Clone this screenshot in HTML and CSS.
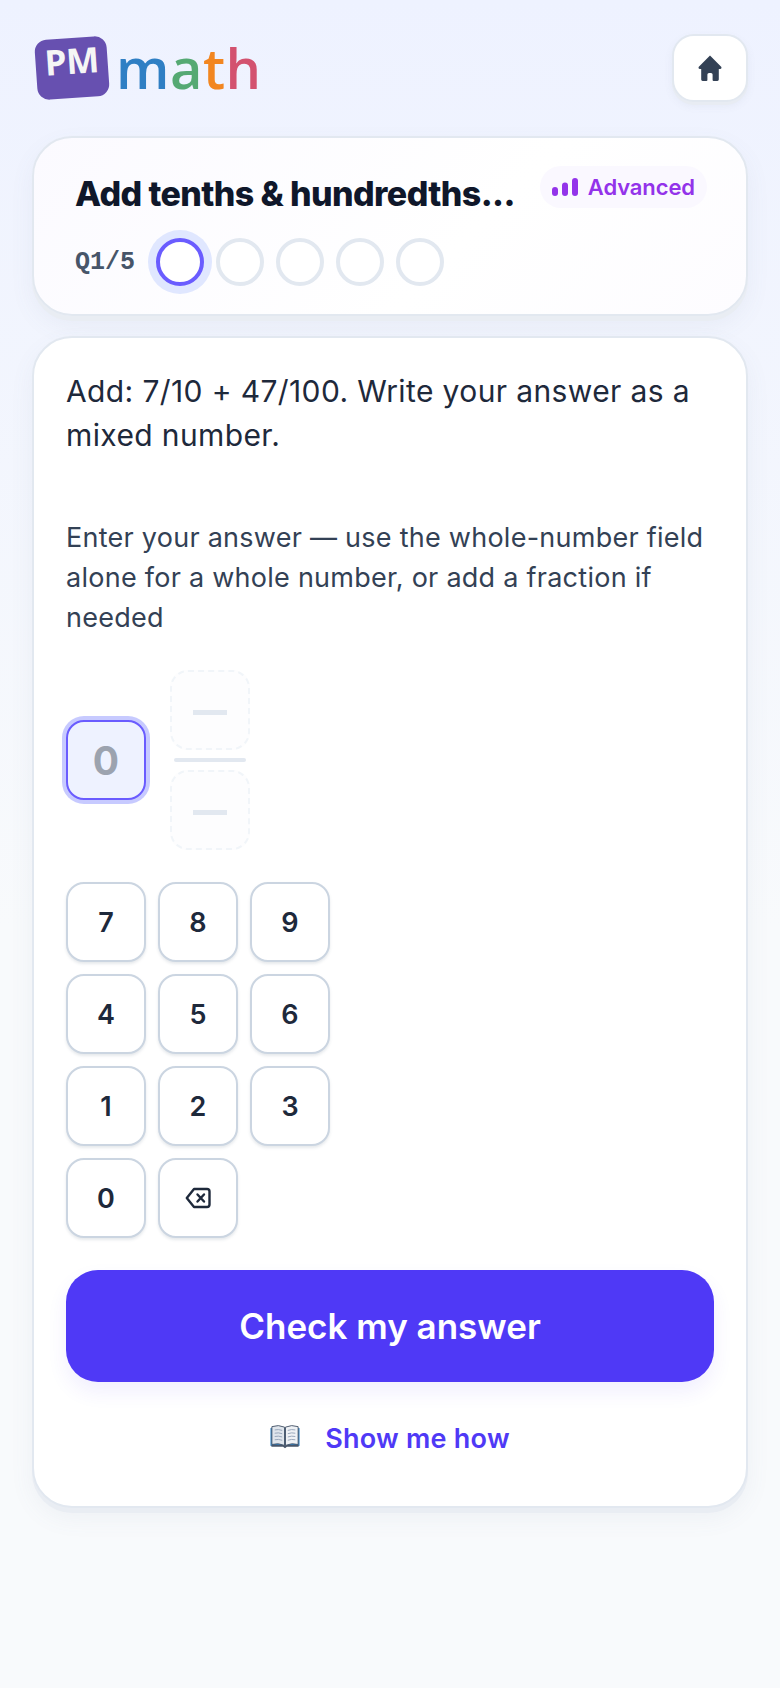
FILE: index.html
```html
<!DOCTYPE html>
<html lang="en">
<head>
<meta charset="utf-8">
<title>PM math</title>
<link rel="stylesheet" href="styles.css">
</head>
<body>
<main class="page">
  <header class="topbar">
    <div class="logo">
      <span class="logo-tile">PM</span>
      <span class="logo-word"><span class="c-m">m</span><span class="c-a">a</span><span class="c-t">t</span><span class="c-h">h</span></span>
    </div>
    <button class="home-btn" aria-label="Home">
      <svg width="24" height="27" viewBox="0 0 24 27"><path fill="#334155" d="M12 0.5 L23.4 12 Q24 13.6 22.4 13.9 L20.8 13.9 L20.8 24.6 Q20.8 26 19.4 26 L15.6 26 Q14.6 26 14.6 25 L14.6 19.6 Q14.6 18 13 18 L11 18 Q9.4 18 9.4 19.6 L9.4 25 Q9.4 26 8.4 26 L4.6 26 Q3.2 26 3.2 24.6 L3.2 13.9 L1.6 13.9 Q0 13.6 0.6 12 Z"/></svg>
    </button>
  </header>

  <section class="card quiz-head">
    <div class="title-row">
      <h1 class="title">Add tenths &amp; hundredths...</h1>
      <span class="badge">
        <svg width="26" height="18" viewBox="0 0 26 18"><rect x="0" y="9" width="6" height="9" rx="3" fill="#9333ea"/><rect x="10" y="4.500" width="6" height="13.500" rx="3" fill="#9333ea"/><rect x="20" y="0" width="6" height="18" rx="3" fill="#9333ea"/></svg>
        Advanced
      </span>
    </div>
    <div class="progress">
      <span class="q-label">Q1/5</span>
      <span class="dot active"></span>
      <span class="dot"></span>
      <span class="dot"></span>
      <span class="dot"></span>
      <span class="dot"></span>
    </div>
  </section>

  <section class="card question">
    <p class="prompt">Add: 7/10 + 47/100. Write your answer as a mixed number.</p>
    <p class="hint">Enter your answer — use the whole-number field alone for a whole number, or add a fraction if needed</p>

    <div class="answer">
      <div class="cell whole">0</div>
      <div class="fraction">
        <div class="cell empty"><span class="dash"></span></div>
        <div class="bar"></div>
        <div class="cell empty"><span class="dash"></span></div>
      </div>
    </div>

    <div class="keypad">
      <button class="key">7</button><button class="key">8</button><button class="key">9</button>
      <button class="key">4</button><button class="key">5</button><button class="key">6</button>
      <button class="key">1</button><button class="key">2</button><button class="key">3</button>
      <button class="key">0</button>
      <button class="key" aria-label="Backspace">
        <svg width="26" height="22" viewBox="0 0 26 22" fill="none" stroke="#1e293b" stroke-width="2.400" stroke-linejoin="round" stroke-linecap="round"><path d="M9 2 H22 Q24.500 2 24.500 4.500 V17.500 Q24.500 20 22 20 H9 L1.800 11 Z"/><path d="M12.500 7.500 L19 14.500 M19 7.500 L12.500 14.500"/></svg>
      </button>
    </div>

    <button class="check">Check my answer</button>

    <div class="how">
      <svg class="book" width="30" height="25" viewBox="0 0 32 26">
        <path fill="#2f7fc1" d="M0.500 4 H31.500 V23 H0.500 Z"/>
        <path fill="#475569" d="M1.500 22 H30.500 V24 H18 L16 25.500 L14 24 H1.500 Z"/>
        <path fill="#dfe5ec" stroke="#475569" stroke-width="1" d="M2 2.500 Q9 0 15.500 3 V22.500 Q9 19.500 2 21.500 Z"/>
        <path fill="#eef1f5" stroke="#475569" stroke-width="1" d="M30 2.500 Q23 0 16.500 3 V22.500 Q23 19.500 30 21.500 Z"/>
        <path stroke="#94a3b8" stroke-width="1" fill="none" d="M5 6 Q9 5 13 6.500 M5 9.500 Q9 8.500 13 10 M5 13 Q9 12 13 13.500 M5 16.500 Q9 15.500 13 17 M19 6.500 Q23 5 27 6 M19 10 Q23 8.500 27 9.500 M19 13.500 Q23 12 27 13 M19 17 Q23 15.500 27 16.500"/>
      </svg>
      <span class="how-text">Show me how</span>
    </div>
  </section>
</main>
</body>
</html>
```
FILE: styles.css
```css
* { box-sizing: border-box; }
html, body { margin: 0; padding: 0; }
body {
  min-height: 1688px;
  background: linear-gradient(180deg, #eef2ff 0%, #f8fafc 55%, #f8fafc 100%);
  font-family: Inter, "Liberation Sans", sans-serif;
  color: #1e293b;
}
button { font-family: inherit; }
.page { padding: 34px 32px 0 32px; width: 780px; }

.topbar { display: flex; justify-content: space-between; align-items: center; height: 68px; margin-bottom: 34px; }
.logo { display: flex; align-items: center; gap: 8px; margin-left: 4px; }
.logo-tile {
  width: 72px; height: 60px; border-radius: 12px; background: #6750b0;
  color: #f5f5f5; font-family: "Open Sans", sans-serif; font-weight: 700; font-size: 35px; line-height: 1;
  letter-spacing: -.5px;
  display: flex; justify-content: center; padding-top: 5px;
  transform: rotate(-4deg);
}
.logo-word { font-family: "Open Sans", sans-serif; font-weight: 600; font-size: 56px; line-height: 60px; letter-spacing: .5px; margin-top: -3px; }
.c-m { color: #2f7fc4; } .c-a { color: #55a973; } .c-t { color: #f28620; } .c-h { color: #d3526f; }

.home-btn {
  width: 76px; height: 68px; border-radius: 22px; background: #fff; padding: 0;
  border: 2px solid #e2e8f0; box-shadow: 0 3px 0 #e8ecf3, 0 4px 8px rgba(100,116,139,.08);
  display: flex; align-items: center; justify-content: center;
}

.card {
  background: #fff; border: 2px solid #e2e8f0; border-radius: 40px;
  box-shadow: 0 5px 0 #e9edf3, 0 10px 24px rgba(100,116,139,.07);
}

.quiz-head {
  height: 180px; padding: 28px 39px 0 41px; margin-bottom: 20px;
  background: linear-gradient(135deg, #fbfaff 0%, #ffffff 60%, #fdfcff 100%);
}
.title-row { display: flex; justify-content: space-between; align-items: flex-start; height: 48px; }
.title { margin: 6px 0 0; font-size: 34px; line-height: 44px; font-weight: 800; color: #0f172a; letter-spacing: -.6px; white-space: nowrap; }
.badge {
  display: flex; align-items: center; gap: 10px; height: 42px; padding: 0 12px 0 12px; border-radius: 21px; margin-top: 0;
  background: #faf8ff; color: #9333ea; font-size: 22px; font-weight: 600; letter-spacing: -.1px;
}
.progress { display: flex; align-items: center; gap: 12px; margin-top: 24px; }
.q-label { font-family: "Liberation Mono", monospace; font-weight: 700; font-size: 25px; color: #475569; width: 69px; }
.dot { width: 48px; height: 48px; border-radius: 50%; border: 4px solid #e2e8f0; background: #fff; }
.dot.active { border-color: #6a5cff; box-shadow: 0 0 0 8px #e0e7ff; }

.question { height: 1172px; padding: 31px 32px 0; }
.prompt { margin: 0; font-size: 30px; line-height: 44px; color: #1e293b; letter-spacing: .38px; }
.hint { margin: 61px 0 0; font-size: 27px; line-height: 40px; color: #334155; letter-spacing: .26px; }

.answer { display: flex; align-items: center; gap: 24px; margin-top: 32px; }
.cell {
  width: 80px; height: 80px; border-radius: 18px; display: flex; align-items: center; justify-content: center;
}
.whole {
  background: #eef2ff; border: 2px solid #6a5cff; box-shadow: 0 0 0 4px #c7caff;
  color: #9ca3af; font-size: 39px; font-weight: 700;
}
.fraction { display: flex; flex-direction: column; align-items: center; }
.empty { background: #fdfdfe; border: 2px dashed #f1f5f9; }
.dash { width: 34px; height: 5px; background: #e2e8f0; margin-top: 4px; }
.bar { width: 72px; height: 4px; border-radius: 2px; background: #e2e8f0; margin: 8px 0; }

.keypad { display: grid; grid-template-columns: repeat(3, 80px); grid-auto-rows: 80px; gap: 12px; margin-top: 32px; }
.key {
  width: 80px; height: 80px; border-radius: 18px; background: #fff; padding: 0;
  border: 2px solid #cbd5e1; box-shadow: 0 2px 3px rgba(100,116,139,.16);
  color: #1e293b; font-size: 27px; font-weight: 600;
  display: flex; align-items: center; justify-content: center;
}

.check {
  display: block; width: 100%; height: 112px; margin-top: 32px; border: 0; border-radius: 32px;
  background: #4f39f6; color: #fff; font-size: 35px; font-weight: 600;
  box-shadow: 0 10px 20px rgba(79,57,246,.08);
}
.how { display: flex; align-items: center; justify-content: center; gap: 25px; margin-top: 36px; height: 40px; }
.book { margin-top: -4px; }
.how-text { color: #4f39f6; font-size: 27px; font-weight: 600; letter-spacing: .25px; }
```
